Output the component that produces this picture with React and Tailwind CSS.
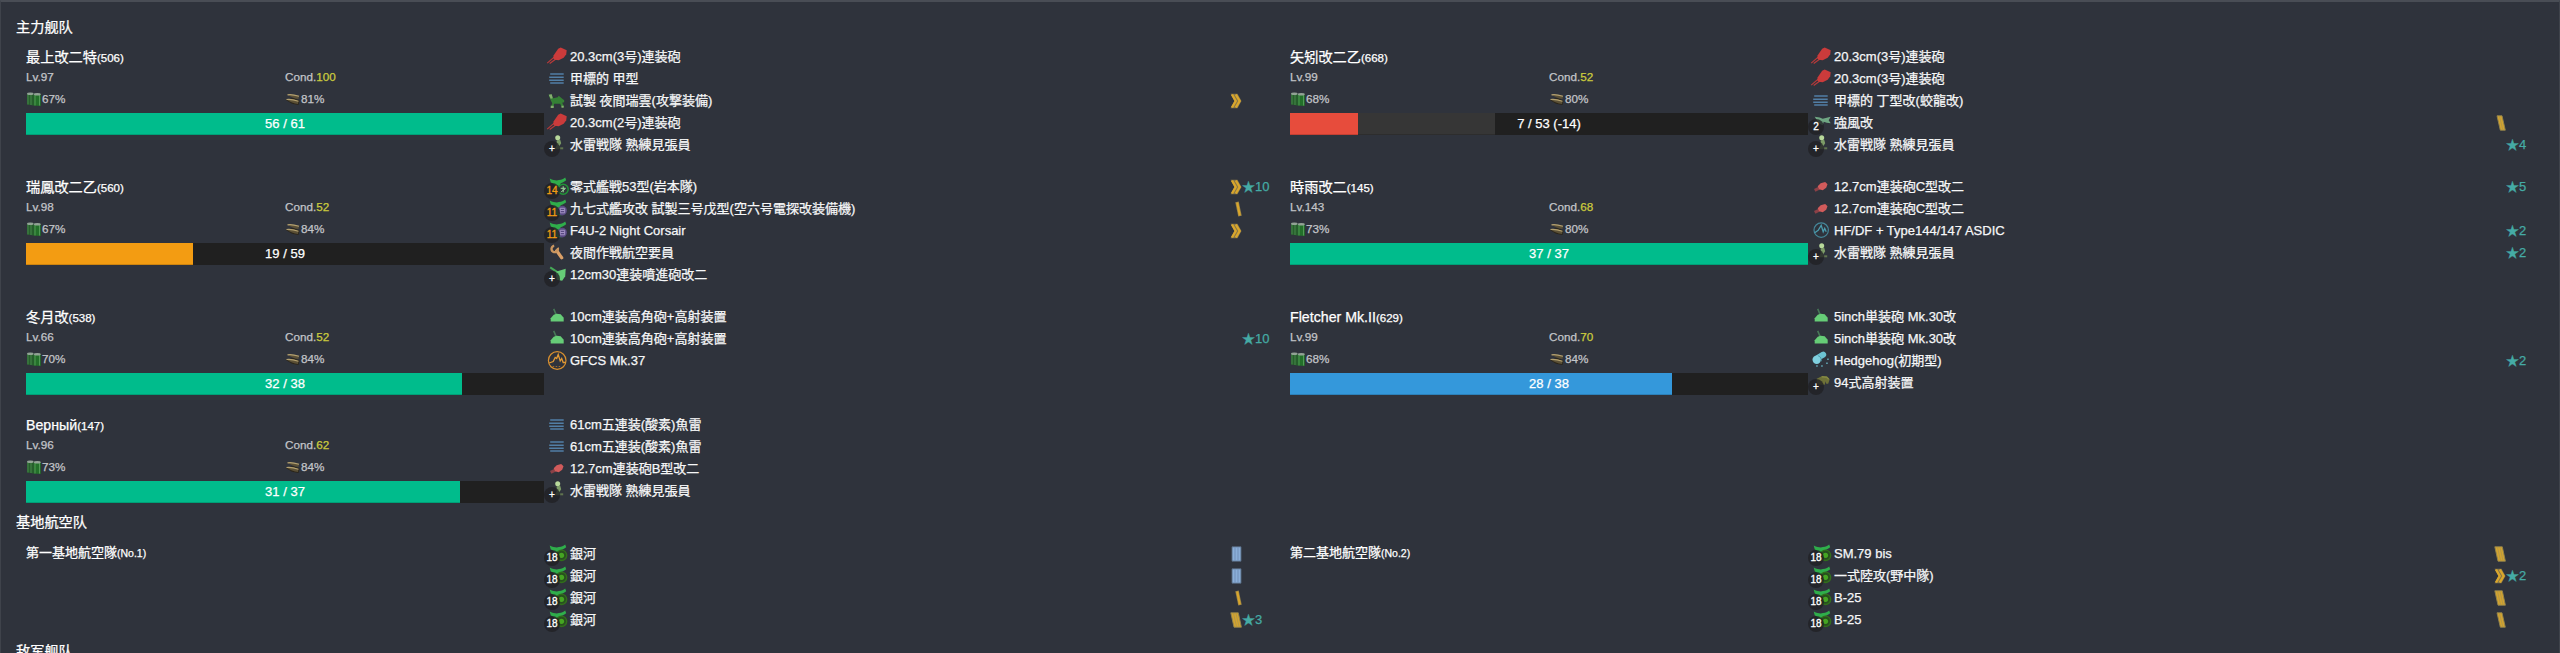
const JP = 'font-["Liberation_Sans","Noto_Sans_CJK_JP","DejaVu_Sans",sans-serif]';
const SC = 'font-["Liberation_Sans","Noto_Sans_CJK_SC",sans-serif]';

function PlaneShape() {
  return (
    <path
      d="M3 2.200 C6 4.200 8 3.600 10 4.200 C13 3.600 15.500 3.600 18.500 1.200 L19.500 4 C18 5 17 6 14 7 L13 10 L15 17 L8 17 L8.500 9 L4 6 Z"
      fill="#2fae4b"
    />
  );
}

function EquipIcon({ kind }) {
  return (
    <svg className="block size-[22px] overflow-visible" viewBox="-0.7 -1.3 22 22" fill="none">
      {kind === "gunLarge" && (
        <>
          <path d="M0.500 16.800 L8 10.300 M3 17.200 L9.500 12.500" stroke="#b83a3a" strokeWidth="1.200" />
          <path d="M7 9 L11.500 2.500 L14 1.200 L20 4 L19.500 8 L17 11.500 L12 14 L8 13.500 L6.500 12 Z" fill="#cb3b3b" />
        </>
      )}
      {kind === "gunSmall" && (
        <>
          <path d="M4 14 L9 11.500" stroke="#8b4147" strokeWidth="3" />
          <path d="M7 10 L10 7 L14.500 5.800 L16.800 8 L15.500 11.500 L12 14 L8.500 13 Z" fill="#d15b5b" />
        </>
      )}
      {kind === "torpedo" && (
        <>
          <path d="M3.500 5.800H17 M3.500 14.800H17" stroke="#527fa6" strokeWidth="1.500" />
          <path d="M2.500 8.900H17 M2.500 11.900H17" stroke="#527fa6" strokeWidth="1.400" />
        </>
      )}
      {kind === "seaplane" && (
        <>
          <path
            d="M2 4.500 L5 4 L6.500 8 L11 7 L12 5.500 L15 8 L17.500 10 L17.500 12 L15.500 12.500 L17.500 16.500 L15 17 L13.500 13.500 L7.500 13.500 L6.500 17.500 L4 17.500 L5.500 13 L3.500 9 Z"
            fill="#357f35"
          />
          <path d="M2 4.500 L5 4 L6 8 L4 8.500Z M4 15.500H7V17.800H4Z M14.800 15.500H17V17.500H14.800Z" fill="#86ad70" />
        </>
      )}
      {kind === "floatFighter" && (
        <path d="M4 4.500 L9 5.200 L12 6.500 L16 5.500 L20 4.500 L18 8 L20 11 L16 10.500 L13 9.500 L12 13 L8 11 Z" fill="#6fa683" />
      )}
      {kind === "lookout" && (
        <>
          <circle cx="11" cy="3.500" r="2.500" fill="#b8d99b" />
          <path d="M10 6 L13.500 5.500 L14.500 9 L12.500 12 L13 15 L8 15 L10 11 Z" fill="#7d9c67" />
          <path d="M13.500 14H16.500" stroke="#61754f" strokeWidth="2" />
        </>
      )}
      {kind === "fighter" && (
        <>
          <PlaneShape />
          <circle cx="16.500" cy="13" r="5" fill="#30373b" stroke="#219638" strokeWidth="1.500" />
          <path d="M14 12H19 M16.500 10V16 M14.500 15.500L18.500 12.500" stroke="#9edb9e" />
        </>
      )}
      {kind === "night" && (
        <>
          <PlaneShape />
          <circle cx="15.500" cy="12.300" r="4.800" fill="#5a4b83" />
          <path d="M13.500 10H18V14.500H13.500ZM13.500 12.200H18" stroke="#a493c5" />
        </>
      )}
      {kind === "bomber" && (
        <>
          <PlaneShape />
          <circle cx="14.800" cy="12" r="5.200" fill="#28501f" stroke="#326f1c" strokeWidth="1.400" />
          <circle cx="14.800" cy="12" r="2.600" fill="#45a522" />
        </>
      )}
      {kind === "wrench" && (
        <>
          <path d="M10 8.500 L15 15.500" stroke="#dba067" strokeWidth="3.200" strokeLinecap="round" />
          <path d="M7.500 3.500 A3.200 3.200 0 1 0 11 5.500" stroke="#c9955f" strokeWidth="2.400" />
        </>
      )}
      {kind === "rocket" && (
        <>
          <path d="M3.500 3 L14 10" stroke="#45a957" strokeWidth="2" />
          <path d="M9 7.500 L19 4.500 L18.500 12 L15.500 16.500 L10 15.500 Z" fill="#66cc77" />
        </>
      )}
      {kind === "highAngle" && (
        <>
          <path d="M7 2.600 L9.500 8.500" stroke="#477857" strokeWidth="1.600" />
          <path d="M4 15.300 V12 L7 8.500 L10 7.500 L14 8 L17 11.500 V15.300 Z" fill="#66cc77" />
        </>
      )}
      {kind === "radar" && (
        <>
          <circle cx="10.500" cy="10.200" r="8.800" stroke="#d9902f" strokeWidth="1.200" />
          <path d="M2.500 12.700 L6.500 11.200 L8.500 7.200 L10 8.200 L11.500 4.200 L13.500 10.700 L15 8.200 L16.500 12.200 H19" stroke="#e39a35" strokeWidth="1.300" />
          <path d="M6 16.200H15" stroke="#a56f2d" strokeDasharray="1.500 1.500" />
        </>
      )}
      {kind === "sonar" && (
        <>
          <circle cx="10.500" cy="9.800" r="7.200" stroke="#45879a" strokeWidth="1.200" />
          <path d="M4 12.500 L7.500 10 L10.500 5 L12.500 11.500 L14 8 L15.500 11.500" stroke="#4a9cae" strokeWidth="1.300" />
        </>
      )}
      {kind === "hedgehog" && (
        <>
          <path d="M8 7 L12.500 4.300" stroke="#6cc3d3" strokeWidth="6" strokeLinecap="round" />
          <circle cx="6" cy="9.500" r="4.200" fill="#80d0df" />
          <path d="M7.500 5.500 A5 5 0 0 1 10.500 11" stroke="#4c95a5" />
          <path d="M5.500 15.800h1.500 M10.500 15.800h1.500 M15.500 13h1.500 M16.500 9h1.500" stroke="#65adbc" strokeWidth="1.500" />
        </>
      )}
      {kind === "director" && (
        <>
          <path d="M6 6.500 L11 4 L16 4.200 L19 7 L17.500 11.500 L15.500 11.500 L15 9 L14 12.500 H8 L6 10.500 Z" fill="#6e7138" />
          <path d="M11 4.500 L16 5 L18 7" stroke="#858a43" strokeWidth="1.500" />
        </>
      )}
    </svg>
  );
}

function Drum() {
  return (
    <svg className="block h-[15px] w-4" viewBox="0 0 16 15">
      <path d="M1 2V12.500L7.500 13.500V2Z" fill="#265f2b" />
      <path d="M2 2V12.500 M5 2V13" stroke="#4d8a52" strokeWidth="0.900" />
      <path d="M7.500 2.500V13.500L14.800 14V2.500Z" fill="#23702a" />
      <path d="M9 3V13.500 M13.500 3V13.500" stroke="#57a05a" strokeWidth="0.900" />
      <ellipse cx="4.300" cy="1.800" rx="3.300" ry="1.200" fill="#92a395" />
      <ellipse cx="11.300" cy="2.300" rx="3.500" ry="1.300" fill="#92a395" />
    </svg>
  );
}

function Ammo() {
  return (
    <svg className="block h-[15px] w-4" viewBox="0 0 16 15">
      <path d="M1 8 L8 6 L14.500 8.500 L13.500 13 L7 11.800 Z" fill="#2b2519" />
      <path d="M2.500 2.800 C6 1.800 10 2.800 14 4 L13.500 7 C9 6.500 6 5 2.500 2.800Z" fill="#5b5036" />
      <path d="M1.500 7.500 C5 6.500 9 7.500 13.500 9 L13 12 C9 11.500 5 10 1.500 7.500Z" fill="#5b5036" />
      <path d="M2.500 2.800 C6 2 10 3 14 4.300 M1.500 7.500 C5 6.800 9 7.700 13.500 9.200" stroke="#b3a070" strokeWidth="1.200" fill="none" />
    </svg>
  );
}

function Rank({ kind }) {
  return (
    <svg className="block h-4 w-3 shrink-0" viewBox="0 0 12 16" fill="none">
      {kind === "chevron" && (
        <>
          <path d="M0.500 0.800 H7.500 L11.500 8 L7.500 15.200 H0.500 L4.500 8 Z" fill="#84754a" />
          <path d="M2 1.500 L5.700 8 L2 14.500 M5.800 1.500 L9.600 8 L5.800 14.500" stroke="#d9a62c" strokeWidth="2.400" />
        </>
      )}
      {kind === "slash1" && (
        <>
          <path d="M7 0.800 L10 15.200" stroke="#8f7d49" strokeWidth="3.600" />
          <path d="M7.200 1.500 L9.800 14.500" stroke="#d9a62c" strokeWidth="2.200" />
        </>
      )}
      {kind === "slash2" && (
        <>
          <path d="M3 0.800 H8 L11.300 15.200 H6.300 Z" fill="#d3a42f" stroke="#93854f" strokeWidth="0.900" />
          <path d="M5.500 1.500 L8.700 14.500" stroke="#ad944c" strokeWidth="0.800" />
        </>
      )}
      {kind === "slash3" && (
        <>
          <path d="M0.800 0.800 H8.300 L11.400 15.200 H4 Z" fill="#d3a42f" stroke="#93854f" strokeWidth="0.900" />
          <path d="M3.500 1.500 L6.500 14.500 M6 1.500 L9 14.500" stroke="#ad944c" strokeWidth="0.800" />
        </>
      )}
      {kind === "bars" && (
        <>
          <path d="M2 0.800 H11 V15.200 H2 Z" fill="#8aaed8" stroke="#56697f" strokeWidth="0.900" />
          <path d="M5 1.500 V14.500 M8 1.500 V14.500" stroke="#6d8db5" strokeWidth="0.900" />
        </>
      )}
    </svg>
  );
}

function Equip({ icon, name, badge, hot, rank, star }) {
  return (
    <li className="flex h-[22px] items-center">
      <span className="relative mr-1 block h-[22px] w-[22px] shrink-0 pl-[2px]">
        <EquipIcon kind={icon} />
        {badge && (
          <span className="absolute top-[8px] left-0 flex size-4 items-center justify-center rounded-full bg-[#202124]/80">
            <span
              className={
                hot
                  ? "text-[10px] leading-none text-[#f39c12] [-webkit-text-stroke:0.3px]"
                  : "text-[10px] leading-none text-white [-webkit-text-stroke:0.3px]"
              }
            >
              {badge}
            </span>
          </span>
        )}
      </span>
      <span className="flex-1 pt-[2px] text-[13px] leading-[22px] whitespace-nowrap text-[#f6f7f8]">{name}</span>
      <span className="flex w-[53px] items-center pt-[2px]">
        <span className="block h-4 w-3">{rank && <Rank kind={rank} />}</span>
        {star && <span className="text-[13px] leading-[20px] text-[#45aba5]">★{star}</span>}
      </span>
    </li>
  );
}

const barColors = {
  green: "bg-[#00bc8c]",
  orange: "bg-[#f39c12]",
  red: "bg-[#e74c3c]",
  blue: "bg-[#3498db]",
};

function Ship({ ship }) {
  return (
    <article className="flex w-[1264px]">
      <div className="-mb-[2px] w-[518px] shrink-0">
        <h3 className="h-[21px] text-[14.2px] leading-[25px] whitespace-nowrap text-white">
          {ship.name}
          <span className="text-[11.500px]">({ship.id})</span>
        </h3>
        <div className="grid grid-cols-2 text-[11.700px] leading-[22px] text-[#c3c5c9]">
          <span>Lv.{ship.lv}</span>
          <span>
            Cond.<span className="text-[#cccc3d]">{ship.cond}</span>
          </span>
          <span className="flex items-center">
            <Drum />
            {ship.fuel}%
          </span>
          <span className="flex items-center">
            <Ammo />
            {ship.ammo}%
          </span>
        </div>
        <div className="mt-[3px] grid h-[22px] bg-[#202020]">
          <div className="col-start-1 row-start-1 flex h-[22px]">
            <div
              className={`${barColors[ship.color]} shadow-[inset_0_-1px_0_rgba(0,0,0,0.150)]`}
              style={{ width: `${(ship.hp / ship.max) * 100}%` }}
            />
            {ship.lost && (
              <div
                className="bg-[#363636] shadow-[inset_0_-1px_0_rgba(0,0,0,0.150)]"
                style={{ width: `${(ship.lost / ship.max) * 100}%` }}
              />
            )}
          </div>
          <div className="col-start-1 row-start-1 text-center text-[13px] leading-[21px] text-white">
            {ship.hp} / {ship.max}
            {ship.lost && ` (-${ship.lost})`}
          </div>
        </div>
      </div>
      <ul className="w-[739px]">
        {ship.equips.map((e, i) => (
          <Equip key={i} {...e} />
        ))}
      </ul>
    </article>
  );
}

function AirBase({ base }) {
  return (
    <article className="flex w-[1264px]">
      <h3 className="w-[518px] shrink-0 text-[13px] leading-[22px] text-white">
        {base.name}
        <span className="text-[10.500px]">({base.id})</span>
      </h3>
      <ul className="w-[739px]">
        {base.equips.map((e, i) => (
          <Equip key={i} {...e} icon="bomber" badge="18" />
        ))}
      </ul>
    </article>
  );
}

const lookout = { icon: "lookout", name: "水雷戦隊 熟練見張員", badge: "+" };

const ships = [
  {
    name: "最上改二特", id: 506, lv: 97, cond: 100, fuel: 67, ammo: 81, hp: 56, max: 61, color: "green",
    equips: [
      { icon: "gunLarge", name: "20.3cm(3号)連装砲" },
      { icon: "torpedo", name: "甲標的 甲型" },
      { icon: "seaplane", name: "試製 夜間瑞雲(攻撃装備)", rank: "chevron" },
      { icon: "gunLarge", name: "20.3cm(2号)連装砲" },
      lookout,
    ],
  },
  {
    name: "矢矧改二乙", id: 668, lv: 99, cond: 52, fuel: 68, ammo: 80, hp: 7, max: 53, lost: 14, color: "red",
    equips: [
      { icon: "gunLarge", name: "20.3cm(3号)連装砲" },
      { icon: "gunLarge", name: "20.3cm(3号)連装砲" },
      { icon: "torpedo", name: "甲標的 丁型改(蛟龍改)" },
      { icon: "floatFighter", name: "強風改", badge: "2", rank: "slash2" },
      { ...lookout, star: 4 },
    ],
  },
  {
    name: "瑞鳳改二乙", id: 560, lv: 98, cond: 52, fuel: 67, ammo: 84, hp: 19, max: 59, color: "orange",
    equips: [
      { icon: "fighter", name: "零式艦戦53型(岩本隊)", badge: "14", hot: true, rank: "chevron", star: 10 },
      { icon: "night", name: "九七式艦攻改 試製三号戊型(空六号電探改装備機)", badge: "11", hot: true, rank: "slash1" },
      { icon: "night", name: "F4U-2 Night Corsair", badge: "11", hot: true, rank: "chevron" },
      { icon: "wrench", name: "夜間作戦航空要員" },
      { icon: "rocket", name: "12cm30連装噴進砲改二", badge: "+" },
    ],
  },
  {
    name: "時雨改二", id: 145, lv: 143, cond: 68, fuel: 73, ammo: 80, hp: 37, max: 37, color: "green",
    equips: [
      { icon: "gunSmall", name: "12.7cm連装砲C型改二", star: 5 },
      { icon: "gunSmall", name: "12.7cm連装砲C型改二" },
      { icon: "sonar", name: "HF/DF + Type144/147 ASDIC", star: 2 },
      { ...lookout, star: 2 },
    ],
  },
  {
    name: "冬月改", id: 538, lv: 66, cond: 52, fuel: 70, ammo: 84, hp: 32, max: 38, color: "green",
    equips: [
      { icon: "highAngle", name: "10cm連装高角砲+高射装置" },
      { icon: "highAngle", name: "10cm連装高角砲+高射装置", star: 10 },
      { icon: "radar", name: "GFCS Mk.37" },
    ],
  },
  {
    name: "Fletcher Mk.II", id: 629, lv: 99, cond: 70, fuel: 68, ammo: 84, hp: 28, max: 38, color: "blue",
    equips: [
      { icon: "highAngle", name: "5inch単装砲 Mk.30改" },
      { icon: "highAngle", name: "5inch単装砲 Mk.30改" },
      { icon: "hedgehog", name: "Hedgehog(初期型)", star: 2 },
      { icon: "director", name: "94式高射装置", badge: "+" },
    ],
  },
  {
    name: "Верный", id: 147, lv: 96, cond: 62, fuel: 73, ammo: 84, hp: 31, max: 37, color: "green",
    equips: [
      { icon: "torpedo", name: "61cm五連装(酸素)魚雷" },
      { icon: "torpedo", name: "61cm五連装(酸素)魚雷" },
      { icon: "gunSmall", name: "12.7cm連装砲B型改二" },
      lookout,
    ],
  },
];

const bases = [
  {
    name: "第一基地航空隊", id: "No.1",
    equips: [
      { name: "銀河", rank: "bars" },
      { name: "銀河", rank: "bars" },
      { name: "銀河", rank: "slash1" },
      { name: "銀河", rank: "slash3", star: 3 },
    ],
  },
  {
    name: "第二基地航空隊", id: "No.2",
    equips: [
      { name: "SM.79 bis", rank: "slash3" },
      { name: "一式陸攻(野中隊)", rank: "chevron", star: 2 },
      { name: "B-25", rank: "slash3" },
      { name: "B-25", rank: "slash2" },
    ],
  },
];

function Title({ children }) {
  return <h2 className={`${SC} pl-[15px] text-[14.2px] leading-[22px] text-white`}>{children}</h2>;
}

export default function App() {
  return (
    <main
      lang="ja"
      className={`${JP} h-[653px] w-[2560px] overflow-hidden border-t-2 border-r border-l border-t-[#494d55] border-r-[#3f434b] border-l-[#3f434b] bg-[#2f333c] pt-[14px] [-webkit-text-stroke:0.25px]`}
    >
      <Title>主力舰队</Title>
      <div className="mt-[7px] grid grid-cols-[1264px_1264px] gap-y-5 pl-[25px]">
        {ships.map((s) => (
          <Ship key={s.id} ship={s} />
        ))}
      </div>
      <div className="mt-[10px]">
        <Title>基地航空队</Title>
      </div>
      <div className="mt-[9px] grid grid-cols-[1264px_1264px] pl-[25px]">
        {bases.map((b) => (
          <AirBase key={b.id} base={b} />
        ))}
      </div>
      <div className="mt-[10px]">
        <Title>敌军舰队</Title>
      </div>
    </main>
  );
}
